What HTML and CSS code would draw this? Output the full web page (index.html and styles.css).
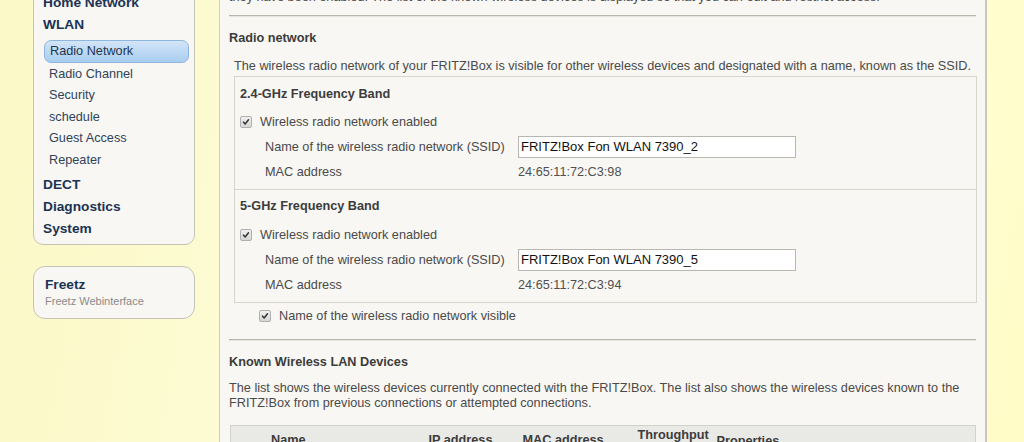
FILE: index.html
```html
<!DOCTYPE html>
<html lang="en">
<head>
<meta charset="utf-8">
<title>FRITZ!Box – Radio Network</title>
<link rel="stylesheet" href="styles.css">
</head>
<body>
<div class="page">
  <aside class="sidebar">
    <nav class="nav">
      <ul class="menu">
        <li class="top">Home Network</li>
        <li class="top">WLAN
          <ul class="sub">
            <li class="active">Radio Network</li>
            <li>Radio Channel</li>
            <li>Security</li>
            <li>schedule</li>
            <li>Guest Access</li>
            <li>Repeater</li>
          </ul>
        </li>
        <li class="top">DECT</li>
        <li class="top">Diagnostics</li>
        <li class="top">System</li>
      </ul>
    </nav>
    <div class="freetz">
      <div class="freetz-title">Freetz</div>
      <div class="freetz-sub">Freetz Webinterface</div>
    </div>
  </aside>

  <main class="content">
    <p class="intro">they have been enabled. The list of the known wireless devices is displayed so that you can edit and restrict access.</p>
    <hr class="rule">

    <h2 class="heading">Radio network</h2>
    <p class="lead">The wireless radio network of your FRITZ!Box is visible for other wireless devices and designated with a name, known as the SSID.</p>

    <div class="bands">
      <section class="band">
        <h3 class="band-title">2.4-GHz Frequency Band</h3>
        <div class="row check-row">
          <span class="check"><svg viewBox="0 0 12 12" width="12" height="12"><path d="M3 6.2 L5 8.4 L9 3.4" fill="none" stroke="#333" stroke-width="1.8" stroke-linecap="round" stroke-linejoin="round"/></svg></span>
          <span>Wireless radio network enabled</span>
        </div>
        <div class="row field-row">
          <span class="label">Name of the wireless radio network (SSID)</span>
          <input class="ssid" type="text" value="FRITZ!Box Fon WLAN 7390_2">
        </div>
        <div class="row field-row">
          <span class="label">MAC address</span>
          <span class="value">24:65:11:72:C3:98</span>
        </div>
      </section>
      <section class="band">
        <h3 class="band-title">5-GHz Frequency Band</h3>
        <div class="row check-row">
          <span class="check"><svg viewBox="0 0 12 12" width="12" height="12"><path d="M3 6.2 L5 8.4 L9 3.4" fill="none" stroke="#333" stroke-width="1.8" stroke-linecap="round" stroke-linejoin="round"/></svg></span>
          <span>Wireless radio network enabled</span>
        </div>
        <div class="row field-row">
          <span class="label">Name of the wireless radio network (SSID)</span>
          <input class="ssid" type="text" value="FRITZ!Box Fon WLAN 7390_5">
        </div>
        <div class="row field-row">
          <span class="label">MAC address</span>
          <span class="value">24:65:11:72:C3:94</span>
        </div>
      </section>
    </div>

    <div class="row check-row visible-row">
      <span class="check"><svg viewBox="0 0 12 12" width="12" height="12"><path d="M3 6.2 L5 8.4 L9 3.4" fill="none" stroke="#333" stroke-width="1.8" stroke-linecap="round" stroke-linejoin="round"/></svg></span>
      <span>Name of the wireless radio network visible</span>
    </div>

    <hr class="rule rule-2">

    <h2 class="heading heading-2">Known Wireless LAN Devices</h2>
    <p class="desc">The list shows the wireless devices currently connected with the FRITZ!Box. The list also shows the wireless devices known to the FRITZ!Box from previous connections or attempted connections.</p>

    <table class="devices">
      <thead>
        <tr>
          <th class="c-name">Name</th>
          <th class="c-ip">IP address</th>
          <th class="c-mac">MAC address</th>
          <th class="c-tp">Throughput<br>Mbit/s</th>
          <th class="c-prop">Properties</th>
          <th class="c-rest"></th>
        </tr>
      </thead>
    </table>
  </main>
</div>
</body>
</html>
```

FILE: styles.css
```css
* { box-sizing: border-box; }

html, body {
  margin: 0;
  height: 100%;
  overflow: hidden;
}

body {
  font-family: "Liberation Sans", Arial, sans-serif;
  font-size: 12.7px;
  color: #4a4a4a;
  background: linear-gradient(100deg, #fbf9c6 0%, #fffde0 55%, #fffed8 80%, #fffcc6 100%);
}

.page {
  display: flex;
  align-items: flex-start;
  padding-left: 33px;
}

/* ---------- sidebar ---------- */
.sidebar {
  width: 162px;
  flex: none;
  margin-top: -19px;
}

.nav {
  background: #f8f7f3;
  border: 1px solid #c4c4b4;
  border-radius: 10px;
  padding: 10px 5px 4px 9px;
}

.menu, .sub {
  list-style: none;
  margin: 0;
  padding: 0;
}

.top {
  font-size: 13.7px;
  font-weight: bold;
  line-height: 22px;
  color: #1b3353;
}

.sub {
  margin: 4px 0 2.5px 1px;
  font-weight: normal;
}

.sub li {
  font-size: 12.7px;
  line-height: 21.5px;
  color: #2f4359;
  padding-left: 5px;
}

.sub li:nth-child(2) { padding-top: 1px; line-height: 21px; }

.sub li.active {
  line-height: 21px;
  border: 1px solid #8fb6dd;
  border-radius: 7px;
  background: linear-gradient(to bottom, #d3e5f7, #a9cdf0);
  color: #23364e;
}

.freetz {
  margin-top: 21px;
  background: #f8f7f3;
  border: 1px solid #c4c4b4;
  border-radius: 12px;
  padding: 9px 11px 9px;
  height: 53px;
}

.freetz-title {
  font-size: 13.7px;
  font-weight: bold;
  color: #1b3353;
  line-height: 17px;
}

.freetz-sub {
  font-size: 11px;
  color: #8a8a8a;
  line-height: 16px;
}

/* ---------- content ---------- */
.content {
  margin-left: 24px;
  margin-top: -10px;
  width: 768px;
  height: 480px;
  background: #f8f7f3;
  border-left: 1px solid #cfcfc0;
  border-right: 2px solid #c8c8b8;
  padding: 0 9px 0 9px;
}

.intro {
  margin: 0;
  line-height: 15px;
}

.rule {
  border: 0;
  border-top: 1px solid #b6b6aa;
  border-bottom: 1px solid #e6e6df;
  margin: 10px 0 0;
  height: 0;
}

.heading {
  font-size: 12.7px;
  font-weight: bold;
  color: #3c3c3c;
  line-height: 16px;
  margin: 13px 0 0;
}

.lead {
  margin: 12px 0 0 5px;
  line-height: 16px;
}

.bands {
  margin: 2px 0 0 5px;
  border: 1px solid #d6d6ce;
  width: 743px;
}

.band {
  padding: 9px 5px 5px;
}

.band + .band {
  border-top: 1px solid #d6d6ce;
  padding-top: 8px;
}

.band-title {
  font-size: 12.7px;
  font-weight: bold;
  color: #3c3c3c;
  line-height: 16px;
  margin: 0 0 7px;
}

.band + .band .band-title { margin-bottom: 8px; }

.row {
  display: flex;
  align-items: center;
  height: 25px;
}

.check {
  width: 12px;
  height: 12px;
  flex: none;
  border: 1px solid #b0b0b0;
  border-radius: 2px;
  background: linear-gradient(#f0f0f0, #d6d6d6);
  display: flex;
  align-items: center;
  justify-content: center;
  margin-right: 8px;
}

.check svg { display: block; width: 10px; height: 10px; }

.field-row { padding-left: 25px; }

.label { width: 253px; flex: none; }

.ssid {
  width: 278px;
  height: 22px;
  border: 1px solid #b8b8b0;
  background: #fff;
  font-family: "Liberation Sans", Arial, sans-serif;
  font-size: 13px;
  color: #111;
  padding: 0 2px;
  margin: 0;
}

.value { color: #505050; }

.visible-row {
  margin-left: 30px;
  margin-top: 0;
}

.rule-2 { margin-top: 11px; }

.heading-2 { margin-top: 13px; }

.desc {
  margin: 11px 0 0;
  line-height: 15px;
}

.devices {
  margin: 14px 0 0 1px;
  width: 746px;
  border-collapse: collapse;
  background: #e9e9e6;
  border: 1px solid #d2d2cc;
}

.devices th {
  font-size: 12.7px;
  font-weight: bold;
  color: #3c3c3c;
  text-align: left;
  line-height: 15px;
  padding: 2px 0 0;
  vertical-align: top;
}

.c-name { width: 198px; padding-left: 40px !important; padding-top: 7px !important; }
.c-ip { width: 94px; padding-top: 7px !important; }
.c-mac { width: 115px; padding-top: 7px !important; }
.c-tp { width: 79px; }
.c-prop { width: 100px; padding-top: 8px !important; }
```
